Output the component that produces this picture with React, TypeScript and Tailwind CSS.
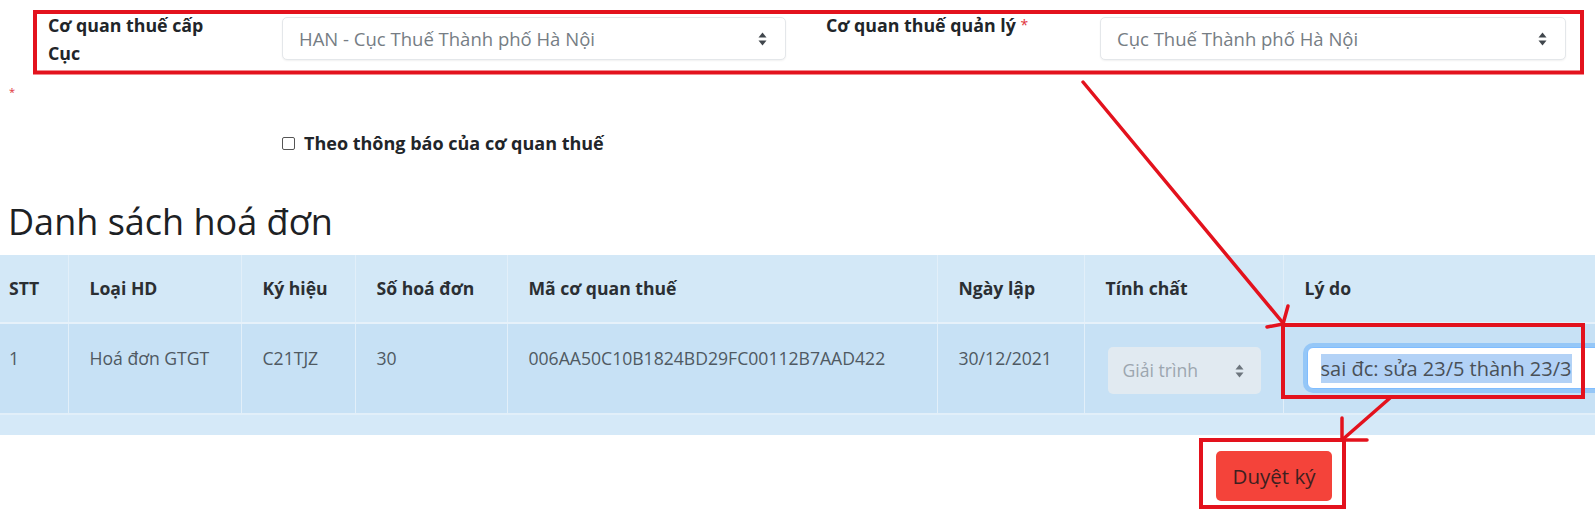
import React from 'react';

function SortArrows({ className = '' }: { className?: string }) {
  return (
    <svg className={className} width="9" height="14" viewBox="0 0 9 14" fill="currentColor">
      <path d="M4.5 0.5L8.5 5.5H0.5z" />
      <path d="M4.5 13.5L0.5 8.5H8.5z" />
    </svg>
  );
}

function FakeSelect({ value, className = '' }: { value: string; className?: string }) {
  return (
    <div
      className={`flex items-center justify-between h-[43px] pl-[16px] pr-[18px] bg-white border border-[#e4e7ea] rounded-[5px] shadow-[0_1px_2px_rgba(0,0,0,0.06)] text-[18.5px] text-[#767d84] ${className}`}
    >
      <span>{value}</span>
      <SortArrows className="text-[#40464c]" />
    </div>
  );
}

const headers = ['STT', 'Loại HD', 'Ký hiệu', 'Số hoá đơn', 'Mã cơ quan thuế', 'Ngày lập', 'Tính chất', 'Lý do'];
const colWidths = ['w-[68px]', 'w-[173px]', 'w-[114px]', 'w-[152px]', 'w-[430px]', 'w-[147px]', 'w-[199px]', 'w-[312px]'];

export default function App() {
  return (
    <div className="relative w-[1595px] h-[516px] overflow-hidden bg-white text-[#212529] font-['Open_Sans',sans-serif]">
      {/* Filter row */}
      <div className="flex h-[74px] pt-[17px]">
        <div className="ml-[48px] w-[234px] -mt-[6px] text-[17.8px] leading-[28px] font-bold">
          Cơ quan thuế cấp
          <br />
          Cục
        </div>
        <FakeSelect value="HAN - Cục Thuế Thành phố Hà Nội" className="w-[504px]" />
        <div className="ml-[40px] w-[274px] -mt-[6px] text-[17.8px] leading-[28px] font-bold">
          Cơ quan thuế quản lý <span className="text-[#e0333a] font-normal text-[14px] align-top">*</span>
        </div>
        <FakeSelect value="Cục Thuế Thành phố Hà Nội" className="w-[466px]" />
      </div>

      <div className="mt-[12px] h-[12px] pl-[9px] text-[11px] leading-[12px] text-[#e0333a]">*</div>

      {/* Checkbox */}
      <label className="mt-[32px] ml-[282px] flex items-center gap-[9px] h-[26px] text-[18px] font-bold">
        <span className="w-[13px] h-[13px] border border-[#555] rounded-[2px] bg-white" />
        Theo thông báo của cơ quan thuế
      </label>

      <h2 className="mt-[46px] ml-[8px] h-[40px] text-[36px] leading-[40px] text-[#1d2124]">Danh sách hoá đơn</h2>

      {/* Invoice table */}
      <table className="mt-[13px] w-[1595px] table-fixed border-collapse text-[17.6px]">
        <colgroup>
          {colWidths.map((w, i) => (
            <col key={i} className={w} />
          ))}
        </colgroup>
        <thead>
          <tr className="h-[68px] bg-[#d3e8f7] border-b-2 border-[#e6f1fa]">
            {headers.map((h, i) => (
              <th
                key={h}
                className={`text-left align-middle font-bold text-[#2b2f33] ${i === 0 ? 'pl-[9px]' : 'pl-[21px] border-l border-[#e2eff9]'}`}
              >
                {h}
              </th>
            ))}
          </tr>
        </thead>
        <tbody>
          <tr className="h-[91px] bg-[#c7e1f5] text-[#4f5962] border-b-2 border-[#e2eff9]">
            <td className="pl-[9px] pt-[21px] align-top">1</td>
            <td className="pl-[21px] pt-[21px] align-top border-l border-[#e2eff9]">Hoá đơn GTGT</td>
            <td className="pl-[21px] pt-[21px] align-top border-l border-[#e2eff9]">C21TJZ</td>
            <td className="pl-[21px] pt-[21px] align-top border-l border-[#e2eff9]">30</td>
            <td className="pl-[21px] pt-[21px] align-top border-l border-[#e2eff9]">006AA50C10B1824BD29FC00112B7AAD422</td>
            <td className="pl-[21px] pt-[21px] align-top border-l border-[#e2eff9]">30/12/2021</td>
            <td className="pl-[23px] pt-[23px] align-top border-l border-[#e2eff9]">
              <div className="flex items-center justify-between w-[153px] h-[47px] pl-[15px] pr-[17px] rounded-[5px] bg-[#e1eaf1] text-[#9ca6af]">
                <span>Giải trình</span>
                <SortArrows className="text-[#6c757d]" />
              </div>
            </td>
            <td className="pl-[23px] pt-[23px] align-top border-l border-[#e2eff9] overflow-hidden">
              <div className="flex items-center w-[300px] h-[42px] pl-[13px] bg-white border border-[#80bdff] rounded-[6px] shadow-[0_0_0_4px_rgba(0,123,255,0.25)] text-[20px] text-[#495057] whitespace-nowrap">
                <span className="bg-[#b3d2f6] leading-[29px]">sai đc: sửa 23/5 thành 23/3</span>
              </div>
            </td>
          </tr>
          <tr className="h-[21px] bg-[#d5e9f8]">
            <td colSpan={8} />
          </tr>
        </tbody>
      </table>

      <button className="mt-[16px] ml-[1216px] flex items-center justify-center w-[116px] h-[50px] rounded-[5px] bg-[#f4433a] text-[20.5px] text-[#3d2020]">
        Duyệt ký
      </button>

      {/* Red annotations drawn over the screenshot */}
      <svg
        className="absolute inset-0 pointer-events-none"
        width="1595"
        height="516"
        viewBox="0 0 1595 516"
        fill="none"
        stroke="#e3121d"
        strokeLinecap="round"
      >
        <rect x="35" y="12" width="1547" height="60.5" strokeWidth="4" strokeLinecap="butt" />
        <line x1="1083" y1="82" x2="1283" y2="323" strokeWidth="3.5" />
        <line x1="1288" y1="306" x2="1283" y2="324" strokeWidth="3.5" />
        <line x1="1267" y1="327" x2="1283" y2="324" strokeWidth="3.5" />
        <rect x="1283" y="325" width="300" height="72" strokeWidth="4" strokeLinecap="butt" />
        <line x1="1390" y1="398" x2="1342" y2="440" strokeWidth="3.5" />
        <line x1="1342" y1="418" x2="1342" y2="440" strokeWidth="3.5" />
        <line x1="1367" y1="440" x2="1342" y2="440" strokeWidth="3.5" />
        <rect x="1201" y="440" width="143" height="67" strokeWidth="4" strokeLinecap="butt" />
      </svg>
    </div>
  );
}
